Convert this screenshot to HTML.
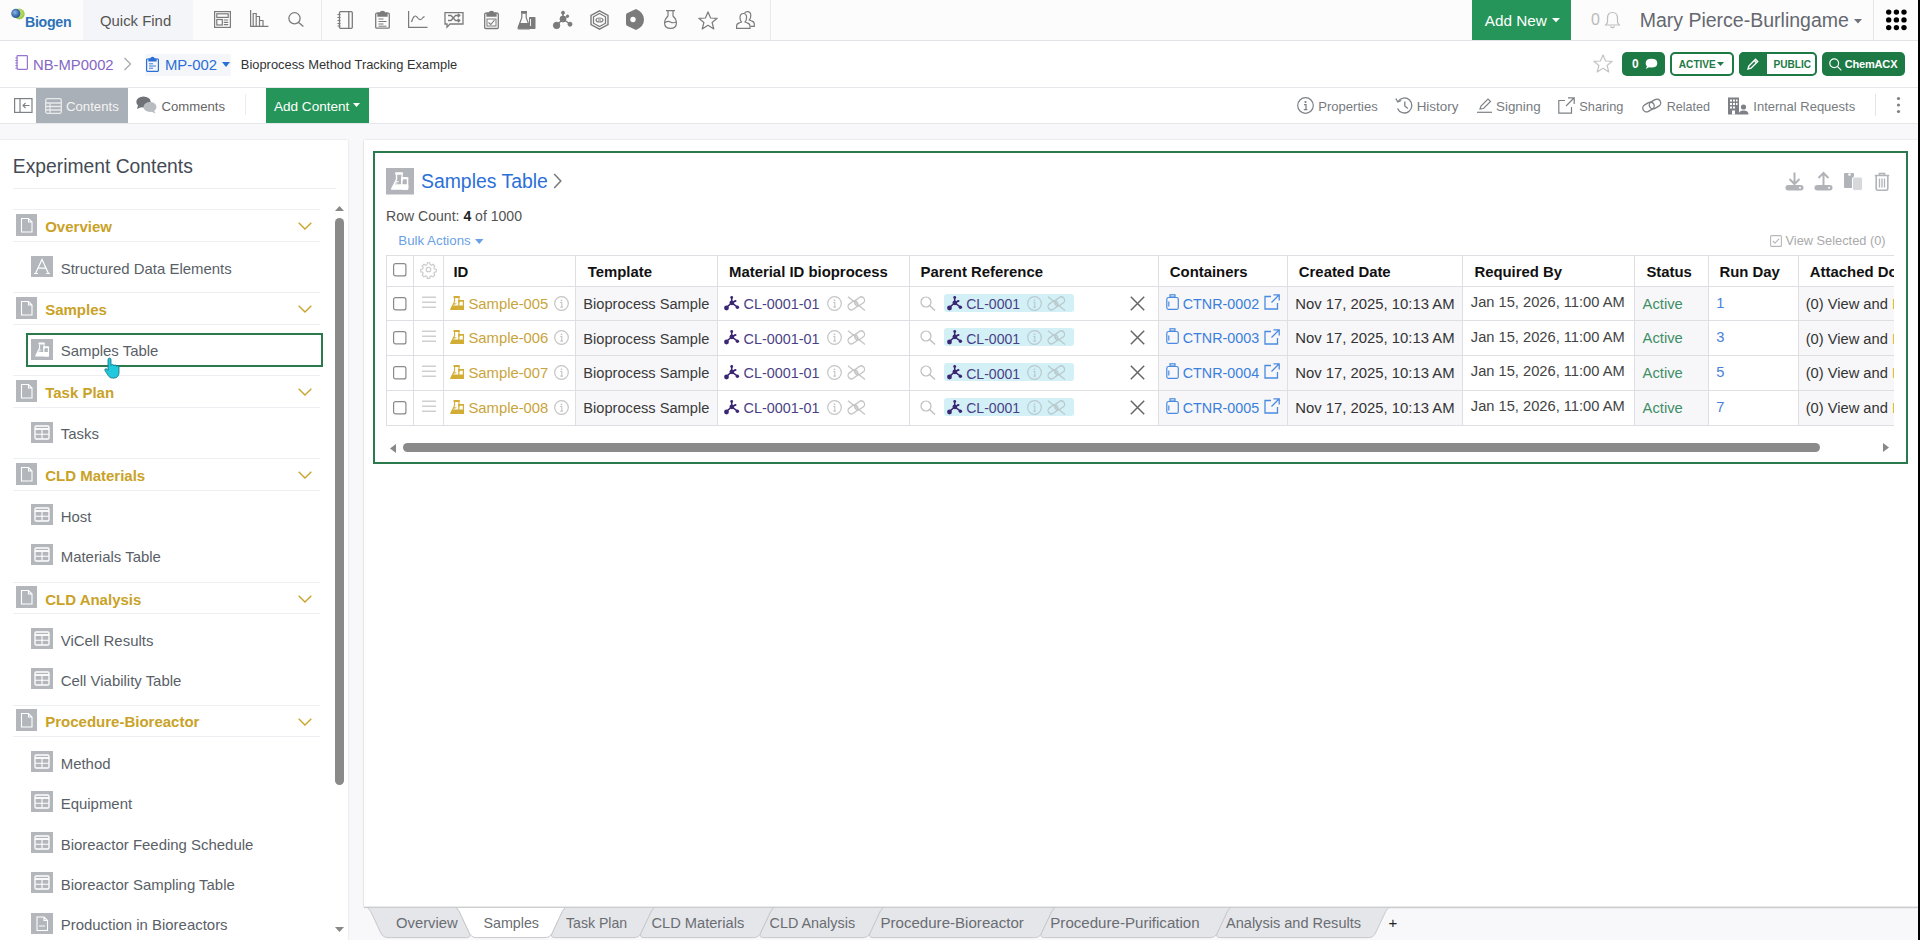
<!DOCTYPE html>
<html><head><meta charset="utf-8"><title>Samples Table</title>
<style>
html,body{margin:0;padding:0}
body{width:1920px;height:940px;overflow:hidden;position:relative;background:#f8f8fa;font-family:"Liberation Sans", sans-serif;}
.t{position:absolute;white-space:nowrap;line-height:20px;}
.b{position:absolute;}
svg.b{overflow:visible}
</style></head><body>

<div class="b" style="left:0px;top:0px;width:1920px;height:40px;background:#fcfcfd;"></div>
<div class="b" style="left:0px;top:40px;width:1918px;height:1px;background:#e2e3e7;"></div>
<div class="b" style="left:83px;top:0px;width:110px;height:40px;background:#f4f5f8;"></div>
<svg class="b" style="left:0;top:0" width="30" height="30" viewBox="0 0 30 30"><defs><radialGradient id="lg" cx="40%" cy="40%" r="65%"><stop offset="0" stop-color="#8fb8e8"/><stop offset="0.6" stop-color="#3d6fb0"/><stop offset="1" stop-color="#2a528f"/></radialGradient><radialGradient id="lg2" cx="40%" cy="40%" r="70%"><stop offset="0" stop-color="#d8eb8a"/><stop offset="1" stop-color="#8fc23a"/></radialGradient></defs><circle cx="19.3" cy="14" r="5.4" fill="url(#lg2)"/><circle cx="15.8" cy="13.4" r="4.6" fill="url(#lg)"/></svg>
<div class="t " style="left:25.0px;top:11.88px;font-size:14.2px;color:#2d72b6;font-weight:700;letter-spacing:-0.3px;">Biogen</div>
<div class="t " style="left:100.0px;top:10.84px;font-size:14.9px;color:#555;">Quick Find</div>
<div class="b" style="left:321px;top:0px;width:1px;height:40px;background:#e8e9ec;"></div>
<div class="b" style="left:770px;top:0px;width:1px;height:40px;background:#e8e9ec;"></div>
<div class="b" style="left:1472px;top:0px;width:99px;height:40px;background:#259559;"></div>
<div class="t " style="left:1484.7px;top:11.10px;font-size:15.3px;color:#fff;">Add New</div>
<svg class="b" style="left:1551.5px;top:17.8px;" width="8" height="4.2" viewBox="0 0 8 4.2"><path d="M0 0h8L4 4.2z" fill="#fff"/></svg>
<div class="t " style="left:1591.0px;top:10.46px;font-size:16px;color:#bbb;">0</div>
<div class="b" style="left:1873px;top:0px;width:1px;height:40px;background:#e4e5e8;"></div>
<div class="t " style="left:1639.7px;top:9.64px;font-size:19.5px;color:#65686f;">Mary Pierce-Burlingame</div>
<svg class="b" style="left:1854px;top:19px;" width="8" height="4.5" viewBox="0 0 8 4.5"><path d="M0 0h8L4 4.5z" fill="#6e7178"/></svg>
<svg class="b" style="left:0;top:0" width="1906" height="40" viewBox="0 0 1906 40"><circle cx="1888.7" cy="12.1" r="2.7" fill="#000"/><circle cx="1888.7" cy="19.9" r="2.7" fill="#000"/><circle cx="1888.7" cy="27.6" r="2.7" fill="#000"/><circle cx="1896.4" cy="12.1" r="2.7" fill="#000"/><circle cx="1896.4" cy="19.9" r="2.7" fill="#000"/><circle cx="1896.4" cy="27.6" r="2.7" fill="#000"/><circle cx="1904" cy="12.1" r="2.7" fill="#000"/><circle cx="1904" cy="19.9" r="2.7" fill="#000"/><circle cx="1904" cy="27.6" r="2.7" fill="#000"/></svg>
<div class="b" style="left:0px;top:41px;width:1918px;height:46px;background:#fff;"></div>
<div class="b" style="left:0px;top:87px;width:1918px;height:1px;background:#e6e7ea;"></div>
<div class="t " style="left:33.0px;top:54.87px;font-size:14.8px;color:#8566c6;">NB-MP0002</div>
<svg class="b" style="left:123px;top:57px;" width="9" height="14" viewBox="0 0 9 14"><path d="M1.5 1 L7.5 7 L1.5 13" fill="none" stroke="#aaa" stroke-width="1.3"/></svg>
<div class="b" style="left:144.5px;top:53.7px;width:86px;height:22px;background:#f4f6fa;border-radius:2px;"></div>
<div class="t " style="left:165.0px;top:54.85px;font-size:14.85px;color:#2a6fd6;">MP-002</div>
<svg class="b" style="left:222px;top:62px;" width="8" height="5" viewBox="0 0 8 5"><path d="M0 0h8L4 5z" fill="#2a6fd6"/></svg>
<div class="t " style="left:240.8px;top:54.78px;font-size:12.9px;color:#333;">Bioprocess Method Tracking Example</div>
<div class="b" style="left:0px;top:88px;width:1918px;height:35px;background:#fff;"></div>
<div class="b" style="left:0px;top:123px;width:1918px;height:1px;background:#e6e7ea;"></div>
<div class="b" style="left:36px;top:88px;width:92px;height:35px;background:#aab0b7;"></div>
<div class="t " style="left:66.0px;top:96.93px;font-size:13.2px;color:#f4f4f4;">Contents</div>
<div class="t " style="left:161.5px;top:96.94px;font-size:13.15px;color:#666;">Comments</div>
<div class="b" style="left:245px;top:94px;width:1px;height:21px;background:#ececee;"></div>
<div class="b" style="left:266px;top:88px;width:102.5px;height:34.5px;background:#259559;"></div>
<div class="t " style="left:274.0px;top:96.80px;font-size:13.55px;color:#fff;">Add Content</div>
<svg class="b" style="left:353px;top:103px;" width="7" height="4" viewBox="0 0 7 4"><path d="M0 0h7L3.5 4z" fill="#fff"/></svg>
<div class="t " style="left:1318.3px;top:97.18px;font-size:13.05px;color:#777b80;">Properties</div>
<div class="t " style="left:1416.7px;top:97.06px;font-size:13.4px;color:#777b80;">History</div>
<div class="t " style="left:1496.0px;top:97.06px;font-size:13.4px;color:#777b80;">Signing</div>
<div class="t " style="left:1579.3px;top:97.26px;font-size:12.8px;color:#777b80;">Sharing</div>
<div class="t " style="left:1666.7px;top:97.33px;font-size:12.6px;color:#777b80;">Related</div>
<div class="t " style="left:1753.3px;top:97.20px;font-size:13px;color:#777b80;">Internal Requests</div>
<div class="b" style="left:1875px;top:94px;width:1px;height:22px;background:#e4e5e8;"></div>
<div class="b" style="left:0px;top:139.5px;width:348px;height:801px;background:#fff;box-shadow:0 0 1.5px rgba(0,0,0,0.16);"></div>
<div class="t " style="left:12.8px;top:156.71px;font-size:19.3px;color:#444a55;">Experiment Contents</div>
<div class="b" style="left:13px;top:188px;width:323px;height:1px;background:#eceef1;"></div>
<div class="b" style="left:364px;top:139.5px;width:1554px;height:767.7px;background:#fff;box-shadow:0 0 1.5px rgba(0,0,0,0.16), 0 1px 2px rgba(0,0,0,0.1);"></div>
<div class="b" style="left:372.5px;top:151px;width:1535.5px;height:313px;border:2px solid #2a7a4e;box-sizing:border-box;"></div>
<div class="b" style="left:13px;top:209px;width:307px;height:1px;background:#eceef1;"></div>
<div class="b" style="left:13px;top:241px;width:307px;height:1px;background:#eceef1;"></div>
<svg class="b" style="left:16px;top:213.8px;" width="21" height="22" viewBox="0 0 21 22"><rect width="21" height="22" fill="#b3b6ba"/><path d="M5.5 4.5h7l3.5 3.5v10h-10.5z M12.5 4.5v3.5h3.5" fill="none" stroke="#fff" stroke-width="1.1"/></svg>
<div class="t " style="left:45.2px;top:217.10px;font-size:15px;color:#c9a227;font-weight:700;">Overview</div>
<svg class="b" style="left:298px;top:222.3px;" width="14" height="8" viewBox="0 0 14 8"><path d="M0.7 0.7 L7 7 L13.3 0.7" fill="none" stroke="#c9a227" stroke-width="1.3"/></svg>
<div class="b" style="left:13px;top:292px;width:307px;height:1px;background:#eceef1;"></div>
<div class="b" style="left:13px;top:324px;width:307px;height:1px;background:#eceef1;"></div>
<svg class="b" style="left:16px;top:296.8px;" width="21" height="22" viewBox="0 0 21 22"><rect width="21" height="22" fill="#b3b6ba"/><path d="M5.5 4.5h7l3.5 3.5v10h-10.5z M12.5 4.5v3.5h3.5" fill="none" stroke="#fff" stroke-width="1.1"/></svg>
<div class="t " style="left:45.2px;top:300.10px;font-size:15px;color:#c9a227;font-weight:700;">Samples</div>
<svg class="b" style="left:298px;top:305.3px;" width="14" height="8" viewBox="0 0 14 8"><path d="M0.7 0.7 L7 7 L13.3 0.7" fill="none" stroke="#c9a227" stroke-width="1.3"/></svg>
<div class="b" style="left:13px;top:375px;width:307px;height:1px;background:#eceef1;"></div>
<div class="b" style="left:13px;top:407px;width:307px;height:1px;background:#eceef1;"></div>
<svg class="b" style="left:16px;top:379.8px;" width="21" height="22" viewBox="0 0 21 22"><rect width="21" height="22" fill="#b3b6ba"/><path d="M5.5 4.5h7l3.5 3.5v10h-10.5z M12.5 4.5v3.5h3.5" fill="none" stroke="#fff" stroke-width="1.1"/></svg>
<div class="t " style="left:45.2px;top:383.10px;font-size:15px;color:#c9a227;font-weight:700;">Task Plan</div>
<svg class="b" style="left:298px;top:388.3px;" width="14" height="8" viewBox="0 0 14 8"><path d="M0.7 0.7 L7 7 L13.3 0.7" fill="none" stroke="#c9a227" stroke-width="1.3"/></svg>
<div class="b" style="left:13px;top:458px;width:307px;height:1px;background:#eceef1;"></div>
<div class="b" style="left:13px;top:490px;width:307px;height:1px;background:#eceef1;"></div>
<svg class="b" style="left:16px;top:462.8px;" width="21" height="22" viewBox="0 0 21 22"><rect width="21" height="22" fill="#b3b6ba"/><path d="M5.5 4.5h7l3.5 3.5v10h-10.5z M12.5 4.5v3.5h3.5" fill="none" stroke="#fff" stroke-width="1.1"/></svg>
<div class="t " style="left:45.2px;top:466.10px;font-size:15px;color:#c9a227;font-weight:700;">CLD Materials</div>
<svg class="b" style="left:298px;top:471.3px;" width="14" height="8" viewBox="0 0 14 8"><path d="M0.7 0.7 L7 7 L13.3 0.7" fill="none" stroke="#c9a227" stroke-width="1.3"/></svg>
<div class="b" style="left:13px;top:582px;width:307px;height:1px;background:#eceef1;"></div>
<div class="b" style="left:13px;top:613px;width:307px;height:1px;background:#eceef1;"></div>
<svg class="b" style="left:16px;top:586.3px;" width="21" height="22" viewBox="0 0 21 22"><rect width="21" height="22" fill="#b3b6ba"/><path d="M5.5 4.5h7l3.5 3.5v10h-10.5z M12.5 4.5v3.5h3.5" fill="none" stroke="#fff" stroke-width="1.1"/></svg>
<div class="t " style="left:45.2px;top:589.60px;font-size:15px;color:#c9a227;font-weight:700;">CLD Analysis</div>
<svg class="b" style="left:298px;top:594.8px;" width="14" height="8" viewBox="0 0 14 8"><path d="M0.7 0.7 L7 7 L13.3 0.7" fill="none" stroke="#c9a227" stroke-width="1.3"/></svg>
<div class="b" style="left:13px;top:704.5px;width:307px;height:1px;background:#eceef1;"></div>
<div class="b" style="left:13px;top:736px;width:307px;height:1px;background:#eceef1;"></div>
<svg class="b" style="left:16px;top:709.05px;" width="21" height="22" viewBox="0 0 21 22"><rect width="21" height="22" fill="#b3b6ba"/><path d="M5.5 4.5h7l3.5 3.5v10h-10.5z M12.5 4.5v3.5h3.5" fill="none" stroke="#fff" stroke-width="1.1"/></svg>
<div class="t " style="left:45.2px;top:712.35px;font-size:15px;color:#c9a227;font-weight:700;">Procedure-Bioreactor</div>
<svg class="b" style="left:298px;top:717.55px;" width="14" height="8" viewBox="0 0 14 8"><path d="M0.7 0.7 L7 7 L13.3 0.7" fill="none" stroke="#c9a227" stroke-width="1.3"/></svg>
<svg class="b" style="left:31px;top:255.7px;" width="22" height="21" viewBox="0 0 22 21"><rect width="22" height="21" fill="#b3b6ba"/><path d="M4.5 17.5 L11 3.5 L17.5 17.5 M7 12.2h8 M3 17.5h4 M15 17.5h4" fill="none" stroke="#fff" stroke-width="1.2"/></svg>
<div class="t " style="left:60.7px;top:258.62px;font-size:14.95px;color:#5a5f67;">Structured Data Elements</div>
<svg class="b" style="left:31px;top:338.5px;" width="22" height="21" viewBox="0 0 22 21"><rect width="22" height="21" fill="#b3b6ba"/><g transform="translate(4 3.5)"><rect x="3.5" y="0" width="6.3" height="2" rx="0.5" fill="#fff"/><path d="M4.6 2 V5.6 L0.8 13.3 M9 2 V5.6 L9.5 6.6" fill="none" stroke="#fff" stroke-width="1.1"/><path d="M2.6 9.6 H8.2 V14 H0.4 Q0 14 0.2 13.4z" fill="#fff"/><rect x="8.8" y="4.6" width="4.6" height="8.8" rx="0.6" fill="none" stroke="#fff" stroke-width="1.2"/><rect x="8.2" y="4" width="5.8" height="1.6" fill="#fff"/><rect x="8.2" y="9.6" width="5.8" height="4.4" rx="0.6" fill="#fff"/><path d="M4 7.5 h2.5 M3.4 8.6 h2" stroke="#fff" stroke-width="0.7"/></g></svg>
<div class="t " style="left:60.7px;top:341.42px;font-size:14.95px;color:#5a5f67;">Samples Table</div>
<svg class="b" style="left:31px;top:421.5px;" width="22" height="21" viewBox="0 0 22 21"><rect width="22" height="21" fill="#b3b6ba"/><rect x="4" y="4" width="14" height="13" rx="1.2" fill="none" stroke="#fff" stroke-width="1.3"/><path d="M4 12.2h14 M11 7.5v9" stroke="#fff" stroke-width="1.1"/><path d="M4 7h14" stroke="#fff" stroke-width="1.8"/></svg>
<div class="t " style="left:60.7px;top:424.42px;font-size:14.95px;color:#5a5f67;">Tasks</div>
<svg class="b" style="left:31px;top:504.20000000000005px;" width="22" height="21" viewBox="0 0 22 21"><rect width="22" height="21" fill="#b3b6ba"/><rect x="4" y="4" width="14" height="13" rx="1.2" fill="none" stroke="#fff" stroke-width="1.3"/><path d="M4 12.2h14 M11 7.5v9" stroke="#fff" stroke-width="1.1"/><path d="M4 7h14" stroke="#fff" stroke-width="1.8"/></svg>
<div class="t " style="left:60.7px;top:507.12px;font-size:14.95px;color:#5a5f67;">Host</div>
<svg class="b" style="left:31px;top:543.9px;" width="22" height="21" viewBox="0 0 22 21"><rect width="22" height="21" fill="#b3b6ba"/><rect x="4" y="4" width="14" height="13" rx="1.2" fill="none" stroke="#fff" stroke-width="1.3"/><path d="M4 12.2h14 M11 7.5v9" stroke="#fff" stroke-width="1.1"/><path d="M4 7h14" stroke="#fff" stroke-width="1.8"/></svg>
<div class="t " style="left:60.7px;top:546.82px;font-size:14.95px;color:#5a5f67;">Materials Table</div>
<svg class="b" style="left:31px;top:628.0px;" width="22" height="21" viewBox="0 0 22 21"><rect width="22" height="21" fill="#b3b6ba"/><rect x="4" y="4" width="14" height="13" rx="1.2" fill="none" stroke="#fff" stroke-width="1.3"/><path d="M4 12.2h14 M11 7.5v9" stroke="#fff" stroke-width="1.1"/><path d="M4 7h14" stroke="#fff" stroke-width="1.8"/></svg>
<div class="t " style="left:60.7px;top:630.92px;font-size:14.95px;color:#5a5f67;">ViCell Results</div>
<svg class="b" style="left:31px;top:668.3px;" width="22" height="21" viewBox="0 0 22 21"><rect width="22" height="21" fill="#b3b6ba"/><rect x="4" y="4" width="14" height="13" rx="1.2" fill="none" stroke="#fff" stroke-width="1.3"/><path d="M4 12.2h14 M11 7.5v9" stroke="#fff" stroke-width="1.1"/><path d="M4 7h14" stroke="#fff" stroke-width="1.8"/></svg>
<div class="t " style="left:60.7px;top:671.22px;font-size:14.95px;color:#5a5f67;">Cell Viability Table</div>
<svg class="b" style="left:31px;top:750.8px;" width="22" height="21" viewBox="0 0 22 21"><rect width="22" height="21" fill="#b3b6ba"/><rect x="4" y="4" width="14" height="13" rx="1.2" fill="none" stroke="#fff" stroke-width="1.3"/><path d="M4 12.2h14 M11 7.5v9" stroke="#fff" stroke-width="1.1"/><path d="M4 7h14" stroke="#fff" stroke-width="1.8"/></svg>
<div class="t " style="left:60.7px;top:753.72px;font-size:14.95px;color:#5a5f67;">Method</div>
<svg class="b" style="left:31px;top:791.4px;" width="22" height="21" viewBox="0 0 22 21"><rect width="22" height="21" fill="#b3b6ba"/><rect x="4" y="4" width="14" height="13" rx="1.2" fill="none" stroke="#fff" stroke-width="1.3"/><path d="M4 12.2h14 M11 7.5v9" stroke="#fff" stroke-width="1.1"/><path d="M4 7h14" stroke="#fff" stroke-width="1.8"/></svg>
<div class="t " style="left:60.7px;top:794.32px;font-size:14.95px;color:#5a5f67;">Equipment</div>
<svg class="b" style="left:31px;top:832.2px;" width="22" height="21" viewBox="0 0 22 21"><rect width="22" height="21" fill="#b3b6ba"/><rect x="4" y="4" width="14" height="13" rx="1.2" fill="none" stroke="#fff" stroke-width="1.3"/><path d="M4 12.2h14 M11 7.5v9" stroke="#fff" stroke-width="1.1"/><path d="M4 7h14" stroke="#fff" stroke-width="1.8"/></svg>
<div class="t " style="left:60.7px;top:835.12px;font-size:14.95px;color:#5a5f67;">Bioreactor Feeding Schedule</div>
<svg class="b" style="left:31px;top:872.1px;" width="22" height="21" viewBox="0 0 22 21"><rect width="22" height="21" fill="#b3b6ba"/><rect x="4" y="4" width="14" height="13" rx="1.2" fill="none" stroke="#fff" stroke-width="1.3"/><path d="M4 12.2h14 M11 7.5v9" stroke="#fff" stroke-width="1.1"/><path d="M4 7h14" stroke="#fff" stroke-width="1.8"/></svg>
<div class="t " style="left:60.7px;top:875.02px;font-size:14.95px;color:#5a5f67;">Bioreactor Sampling Table</div>
<svg class="b" style="left:31px;top:912.5px;" width="22" height="21" viewBox="0 0 22 21"><rect width="22" height="21" fill="#b3b6ba"/><path d="M6 4h7l3.5 3.5v10h-10.5z M13 4v3.5h3.5 M8 13h6" fill="none" stroke="#fff" stroke-width="1.1"/></svg>
<div class="t " style="left:60.7px;top:915.42px;font-size:14.95px;color:#5a5f67;">Production in Bioreactors</div>
<div class="b" style="left:25.5px;top:333px;width:297px;height:34px;border:2px solid #2b7a4b;box-sizing:border-box;"></div>
<svg class="b" style="left:334.5px;top:205.5px;" width="9" height="5" viewBox="0 0 9 5"><path d="M0 5h9L4.5 0z" fill="#888"/></svg>
<div class="b" style="left:335px;top:217.5px;width:8.5px;height:567px;background:#8a8a8a;border-radius:4.5px;"></div>
<svg class="b" style="left:334.5px;top:927.3px;" width="9" height="5" viewBox="0 0 9 5"><path d="M0 0h9L4.5 5z" fill="#888"/></svg>
<svg class="b" style="left:104px;top:357px;" width="16" height="22" viewBox="0 0 16 22"><path d="M4 2.5 c0-1.8 3-1.8 3 0 v6 c0.3-1.5 2.8-1.5 2.8 0.3 c0.3-1.3 2.7-1.2 2.7 0.5 c0.4-1 2.5-0.8 2.5 0.8 v5.5 c0 3-2 5.5-5 5.5 h-1.5 c-2 0-3.2-1-4.2-2.5 l-3.3-5 c-0.8-1.3 1-2.6 2-1.4 l1 1.2z" fill="#22c8dc" stroke="#0a6f80" stroke-width="0.8"/></svg>
<svg class="b" style="left:385.7px;top:168.05px;" width="28" height="26.5" viewBox="0 0 28 26.5"><rect width="28" height="26.5" fill="#b1b4b9"/><g transform="translate(4.8 4.3) scale(1.25)"><rect x="3.5" y="0" width="6.3" height="2" rx="0.5" fill="#fff"/><path d="M4.6 2 V5.6 L0.8 13.3 M9 2 V5.6 L9.5 6.6" fill="none" stroke="#fff" stroke-width="1.1"/><path d="M2.6 9.6 H8.2 V14 H0.4 Q0 14 0.2 13.4z" fill="#fff"/><rect x="8.8" y="4.6" width="4.6" height="8.8" rx="0.6" fill="none" stroke="#fff" stroke-width="1.2"/><rect x="8.2" y="4" width="5.8" height="1.6" fill="#fff"/><rect x="8.2" y="9.6" width="5.8" height="4.4" rx="0.6" fill="#fff"/><path d="M4 7.5 h2.5 M3.4 8.6 h2" stroke="#fff" stroke-width="0.7"/></g></svg>
<div class="t " style="left:421.0px;top:171.28px;font-size:19.4px;color:#2b6fd8;">Samples Table</div>
<svg class="b" style="left:553px;top:173px;" width="9" height="16" viewBox="0 0 9 16"><path d="M1.2 1 L7.8 8 L1.2 15" fill="none" stroke="#777" stroke-width="1.5"/></svg>
<div class="t" style="left:386.1px;top:205.73px;font-size:14.06px;color:#525252;">Row Count: <b style="color:#222">4</b> of 1000</div>
<div class="t " style="left:398.3px;top:231.29px;font-size:13.3px;color:#6b9fe6;">Bulk Actions</div>
<svg class="b" style="left:474.7px;top:238.5px;" width="8.5" height="5" viewBox="0 0 8.5 5"><path d="M0 0h8.5L4.25 5z" fill="#6b9fe6"/></svg>
<svg class="b" style="left:1769.5px;top:234.8px;" width="12" height="12" viewBox="0 0 12 12"><rect x="0.6" y="0.6" width="10.8" height="10.8" rx="1" fill="none" stroke="#b8b8b8" stroke-width="1.1"/><path d="M2.8 6 L5 8.2 L9.2 3.6" fill="none" stroke="#b8b8b8" stroke-width="1.1"/></svg>
<div class="t " style="left:1785.5px;top:231.16px;font-size:12.8px;color:#aaa;">View Selected (0)</div>
<svg class="b" style="left:1785px;top:172px;" width="19" height="19" viewBox="0 0 19 19"><path d="M9.5 0.5 v11 M4.5 7 L9.5 12 L14.5 7" fill="none" stroke="#b0b3b8" stroke-width="2"/><rect x="0.5" y="13" width="18" height="5.5" rx="2.7" fill="#b0b3b8"/><circle cx="15" cy="15.8" r="1" fill="#fff"/></svg>
<svg class="b" style="left:1814.3px;top:172px;" width="19" height="19" viewBox="0 0 19 19"><path d="M9.5 13 v-12 M4.5 6 L9.5 1 L14.5 6" fill="none" stroke="#b0b3b8" stroke-width="2"/><rect x="0.5" y="13" width="18" height="5.5" rx="2.7" fill="#b0b3b8"/><circle cx="15" cy="15.8" r="1" fill="#fff"/></svg>
<svg class="b" style="left:1844px;top:172px;" width="19" height="19" viewBox="0 0 19 19"><rect x="0" y="1" width="10" height="15" rx="1" fill="#b0b3b8"/><circle cx="5.5" cy="2.5" r="1.3" fill="#fff"/><rect x="8.5" y="5" width="10" height="13.5" rx="2" fill="#d6d8db" stroke="#fff" stroke-width="1"/></svg>
<svg class="b" style="left:1873.6px;top:172px;" width="16" height="19" viewBox="0 0 16 19"><path d="M0.8 3.5 h14.4 M5.5 3.5 v-2 h5 v2" fill="none" stroke="#b0b3b8" stroke-width="1.6"/><path d="M2.2 4 v12.5 q0 1.7 1.7 1.7 h8.2 q1.7 0 1.7 -1.7 v-12.5" fill="none" stroke="#b0b3b8" stroke-width="1.6"/><path d="M5.5 6.5 v9 M8 6.5 v9 M10.5 6.5 v9" stroke="#b0b3b8" stroke-width="1.3"/></svg>
<div class="b" style="left:0;top:0;width:1894px;height:940px;overflow:hidden;">
<div class="b" style="left:575px;top:286px;width:142px;height:139px;background:#f7f7f9;"></div>
<div class="b" style="left:1158px;top:286px;width:129px;height:139px;background:#f7f7f9;"></div>
<div class="b" style="left:1287px;top:286px;width:175px;height:139px;background:#f7f7f9;"></div>
<div class="b" style="left:1634px;top:286px;width:74px;height:139px;background:#f7f7f9;"></div>
<div class="b" style="left:1798px;top:286px;width:96px;height:139px;background:#f7f7f9;"></div>
<div class="b" style="left:386px;top:255px;width:1508px;height:1px;background:#dedfe3;"></div>
<div class="b" style="left:386px;top:286px;width:1508px;height:1px;background:#dedfe3;"></div>
<div class="b" style="left:386px;top:320px;width:1508px;height:1px;background:#dedfe3;"></div>
<div class="b" style="left:386px;top:355px;width:1508px;height:1px;background:#dedfe3;"></div>
<div class="b" style="left:386px;top:390px;width:1508px;height:1px;background:#dedfe3;"></div>
<div class="b" style="left:386px;top:425px;width:1508px;height:1px;background:#dedfe3;"></div>
<div class="b" style="left:386px;top:255px;width:1px;height:170px;background:#dedfe3;"></div>
<div class="b" style="left:413px;top:255px;width:1px;height:170px;background:#dedfe3;"></div>
<div class="b" style="left:443px;top:255px;width:1px;height:170px;background:#dedfe3;"></div>
<div class="b" style="left:575px;top:255px;width:1px;height:170px;background:#dedfe3;"></div>
<div class="b" style="left:717px;top:255px;width:1px;height:170px;background:#dedfe3;"></div>
<div class="b" style="left:909px;top:255px;width:1px;height:170px;background:#dedfe3;"></div>
<div class="b" style="left:1158px;top:255px;width:1px;height:170px;background:#dedfe3;"></div>
<div class="b" style="left:1287px;top:255px;width:1px;height:170px;background:#dedfe3;"></div>
<div class="b" style="left:1462px;top:255px;width:1px;height:170px;background:#dedfe3;"></div>
<div class="b" style="left:1634px;top:255px;width:1px;height:170px;background:#dedfe3;"></div>
<div class="b" style="left:1708px;top:255px;width:1px;height:170px;background:#dedfe3;"></div>
<div class="b" style="left:1798px;top:255px;width:1px;height:170px;background:#dedfe3;"></div>
<div class="t " style="left:453.4px;top:261.54px;font-size:14.9px;color:#111;font-weight:700;">ID</div>
<div class="t " style="left:587.7px;top:261.54px;font-size:14.9px;color:#111;font-weight:700;">Template</div>
<div class="t " style="left:729.0px;top:261.54px;font-size:14.9px;color:#111;font-weight:700;">Material ID bioprocess</div>
<div class="t " style="left:920.5px;top:261.54px;font-size:14.9px;color:#111;font-weight:700;">Parent Reference</div>
<div class="t " style="left:1169.8px;top:261.54px;font-size:14.9px;color:#111;font-weight:700;">Containers</div>
<div class="t " style="left:1298.8px;top:261.54px;font-size:14.9px;color:#111;font-weight:700;">Created Date</div>
<div class="t " style="left:1474.4px;top:261.54px;font-size:14.9px;color:#111;font-weight:700;">Required By</div>
<div class="t " style="left:1646.4px;top:261.54px;font-size:14.9px;color:#111;font-weight:700;">Status</div>
<div class="t " style="left:1719.5px;top:261.54px;font-size:14.9px;color:#111;font-weight:700;">Run Day</div>
<div class="t " style="left:1809.8px;top:261.54px;font-size:14.9px;color:#111;font-weight:700;">Attached Documents</div>
<svg class="b" style="left:392.5px;top:263px;" width="13.5" height="13.5" viewBox="0 0 13.5 13.5"><rect x="0.6" y="0.6" width="12.3" height="12.3" rx="2" fill="#fff" stroke="#8a8a8a" stroke-width="1.2"/></svg>
<svg class="b" style="left:420.5px;top:262px;" width="15" height="15" viewBox="0 0 15 15"><g fill="none" stroke="#c9c9c9" stroke-width="1.1"><circle cx="7.5" cy="7.5" r="2.3"/><path d="M6.3 0.8h2.4l0.4 1.9 1.3 0.6 1.7-1 1.7 1.7-1 1.7 0.6 1.3 1.9 0.4v2.4l-1.9 0.4-0.6 1.3 1 1.7-1.7 1.7-1.7-1-1.3 0.6-0.4 1.9h-2.4l-0.4-1.9-1.3-0.6-1.7 1-1.7-1.7 1-1.7-0.6-1.3-1.9-0.4v-2.4l1.9-0.4 0.6-1.3-1-1.7 1.7-1.7 1.7 1 1.3-0.6z"/></g></svg>
<svg class="b" style="left:392.8px;top:296.49999999999994px;" width="13.5" height="13.5" viewBox="0 0 13.5 13.5"><rect x="0.6" y="0.6" width="12.3" height="12.3" rx="2" fill="#fff" stroke="#8a8a8a" stroke-width="1.2"/></svg>
<svg class="b" style="left:421.8px;top:295.79999999999995px;" width="14" height="12" viewBox="0 0 14 12"><path d="M0 1.2h14 M0 6.2h14 M0 11.2h14" stroke="#cfcfcf" stroke-width="1.5"/></svg>
<svg class="b" style="left:450.2px;top:295.99999999999994px;" width="14" height="14" viewBox="0 0 14 14"><rect x="3.5" y="0" width="6.3" height="2" rx="0.5" fill="#d2ad35"/><path d="M4.6 2 V5.6 L0.8 13.3 M9 2 V5.6 L9.5 6.6" fill="none" stroke="#d2ad35" stroke-width="1.1"/><path d="M2.6 9.6 H8.2 V14 H0.4 Q0 14 0.2 13.4z" fill="#d2ad35"/><rect x="8.8" y="4.6" width="4.6" height="8.8" rx="0.6" fill="none" stroke="#d2ad35" stroke-width="1.2"/><rect x="8.2" y="4" width="5.8" height="1.6" fill="#d2ad35"/><rect x="8.2" y="9.6" width="5.8" height="4.4" rx="0.6" fill="#d2ad35"/><path d="M4 7.5 h2.5 M3.4 8.6 h2" stroke="#d2ad35" stroke-width="0.7"/></svg>
<div class="t " style="left:468.5px;top:294.17px;font-size:14.8px;color:#c9a43a;">Sample-005</div>
<svg class="b" style="left:553.6px;top:295.79999999999995px;" width="15" height="15" viewBox="0 0 15 15"><circle cx="7.5" cy="7.5" r="6.8" fill="none" stroke="#c4c4c4" stroke-width="1.2"/><circle cx="7.5" cy="4.3" r="0.9" fill="#c4c4c4"/><path d="M6.3 6.5h1.5v4.6 M6.3 11.1h2.6" fill="none" stroke="#c4c4c4" stroke-width="1.1"/></svg>
<div class="t " style="left:583.3px;top:294.23px;font-size:14.63px;color:#3a3a3a;">Bioprocess Sample</div>
<svg class="b" style="left:724.2px;top:295.59999999999997px;" width="15" height="15" viewBox="0 0 15 15"><g fill="#3b2673" stroke="#3b2673"><path d="M7.7 1.4 V6.8 L2.1 11.8 M7.7 6.8 L13.5 11.1 M7.7 6.8 L11.3 5" stroke-width="1.5" fill="none"/><circle cx="7.7" cy="1.5" r="1.4" stroke="none"/><circle cx="7.9" cy="6.8" r="2.4" stroke="none"/><circle cx="2.5" cy="12" r="2.4" stroke="none"/><circle cx="13.4" cy="11.2" r="1.7" stroke="none"/><circle cx="11.4" cy="5" r="1.1" stroke="none"/></g></svg>
<div class="t " style="left:743.6px;top:294.31px;font-size:14.39px;color:#4a3f86;">CL-0001-01</div>
<svg class="b" style="left:827.3px;top:295.79999999999995px;" width="15" height="15" viewBox="0 0 15 15"><circle cx="7.5" cy="7.5" r="6.8" fill="none" stroke="#c4c4c4" stroke-width="1.2"/><circle cx="7.5" cy="4.3" r="0.9" fill="#c4c4c4"/><path d="M6.3 6.5h1.5v4.6 M6.3 11.1h2.6" fill="none" stroke="#c4c4c4" stroke-width="1.1"/></svg>
<svg class="b" style="left:847.3px;top:295.79999999999995px;" width="19" height="15" viewBox="0 0 19 15"><g fill="none" stroke="#c4c4c4" stroke-width="1.3"><rect x="-5.3" y="-3.3" width="10.6" height="6.6" rx="3.3" transform="translate(6 9.4) rotate(-35)"/><rect x="-5.3" y="-3.3" width="10.6" height="6.6" rx="3.3" transform="translate(12.6 5.4) rotate(-35)"/><path d="M1 0.8 L18 14.4" stroke-width="1.3"/></g></svg>
<svg class="b" style="left:920px;top:295.79999999999995px;" width="16" height="15" viewBox="0 0 16 15"><circle cx="6" cy="6" r="5" fill="none" stroke="#bdbdbd" stroke-width="1.2"/><path d="M9.6 9.6 L15 14.5" stroke="#bdbdbd" stroke-width="1.3"/></svg>
<div class="b" style="left:943.6px;top:294.0px;width:130.4px;height:18px;background:#d3f0f7;border-radius:3px;"></div>
<svg class="b" style="left:947px;top:295.59999999999997px;" width="15" height="15" viewBox="0 0 15 15"><g fill="#3b2673" stroke="#3b2673"><path d="M7.7 1.4 V6.8 L2.1 11.8 M7.7 6.8 L13.5 11.1 M7.7 6.8 L11.3 5" stroke-width="1.5" fill="none"/><circle cx="7.7" cy="1.5" r="1.4" stroke="none"/><circle cx="7.9" cy="6.8" r="2.4" stroke="none"/><circle cx="2.5" cy="12" r="2.4" stroke="none"/><circle cx="13.4" cy="11.2" r="1.7" stroke="none"/><circle cx="11.4" cy="5" r="1.1" stroke="none"/></g></svg>
<div class="t " style="left:966.2px;top:294.43px;font-size:14.05px;color:#4a3f86;">CL-0001</div>
<svg class="b" style="left:1027.1px;top:295.79999999999995px;" width="15" height="15" viewBox="0 0 15 15"><circle cx="7.5" cy="7.5" r="6.8" fill="none" stroke="#b9c9cc" stroke-width="1.2"/><circle cx="7.5" cy="4.3" r="0.9" fill="#b9c9cc"/><path d="M6.3 6.5h1.5v4.6 M6.3 11.1h2.6" fill="none" stroke="#b9c9cc" stroke-width="1.1"/></svg>
<svg class="b" style="left:1046.9px;top:295.79999999999995px;" width="19" height="15" viewBox="0 0 19 15"><g fill="none" stroke="#b9c9cc" stroke-width="1.3"><rect x="-5.3" y="-3.3" width="10.6" height="6.6" rx="3.3" transform="translate(6 9.4) rotate(-35)"/><rect x="-5.3" y="-3.3" width="10.6" height="6.6" rx="3.3" transform="translate(12.6 5.4) rotate(-35)"/><path d="M1 0.8 L18 14.4" stroke-width="1.3"/></g></svg>
<svg class="b" style="left:1130px;top:295.79999999999995px;" width="15" height="15" viewBox="0 0 15 15"><path d="M0.8 0.8 L14.2 14.2 M14.2 0.8 L0.8 14.2" stroke="#666" stroke-width="1.5"/></svg>
<svg class="b" style="left:1165.6px;top:294.09999999999997px;" width="13" height="16" viewBox="0 0 13 16"><g fill="none" stroke="#4a8ae0" stroke-width="1.2"><rect x="4" y="0.8" width="5" height="2.2"/><path d="M2.5 3.5 h8 q1.8 0 1.8 1.8 v8.5 q0 1.5 -1.5 1.5 h-8.5 q-1.5 0 -1.5 -1.5 v-8.5 q0 -1.8 1.7 -1.8z"/><path d="M2.8 7.5 v5"/></g></svg>
<div class="t " style="left:1182.7px;top:293.83px;font-size:14.34px;color:#3a80dc;">CTNR-0002</div>
<svg class="b" style="left:1264px;top:294.29999999999995px;" width="16" height="16" viewBox="0 0 16 16"><g fill="none" stroke="#4a8ae0" stroke-width="1.3"><path d="M7 2.5 H1 V15 H13.5 V9"/><path d="M9.5 0.8 H15.2 V6.5 M15 1 L7.5 8.5"/></g></svg>
<div class="t " style="left:1295.2px;top:294.15px;font-size:14.86px;color:#333;">Nov 17, 2025, 10:13 AM</div>
<div class="t " style="left:1470.8px;top:292.21px;font-size:14.68px;color:#444;">Jan 15, 2026, 11:00 AM</div>
<div class="t " style="left:1642.6px;top:294.19px;font-size:14.76px;color:#3e8e66;">Active</div>
<div class="t " style="left:1716.3px;top:293.01px;font-size:14.7px;color:#4a80d8;">1</div>
<div class="t" style="left:1805.7px;top:294.21px;font-size:14.7px;color:#333;">(0) View and <span style="color:#d4b13c">Edit</span></div>
<svg class="b" style="left:392.8px;top:330.8px;" width="13.5" height="13.5" viewBox="0 0 13.5 13.5"><rect x="0.6" y="0.6" width="12.3" height="12.3" rx="2" fill="#fff" stroke="#8a8a8a" stroke-width="1.2"/></svg>
<svg class="b" style="left:421.8px;top:330.1px;" width="14" height="12" viewBox="0 0 14 12"><path d="M0 1.2h14 M0 6.2h14 M0 11.2h14" stroke="#cfcfcf" stroke-width="1.5"/></svg>
<svg class="b" style="left:450.2px;top:330.3px;" width="14" height="14" viewBox="0 0 14 14"><rect x="3.5" y="0" width="6.3" height="2" rx="0.5" fill="#d2ad35"/><path d="M4.6 2 V5.6 L0.8 13.3 M9 2 V5.6 L9.5 6.6" fill="none" stroke="#d2ad35" stroke-width="1.1"/><path d="M2.6 9.6 H8.2 V14 H0.4 Q0 14 0.2 13.4z" fill="#d2ad35"/><rect x="8.8" y="4.6" width="4.6" height="8.8" rx="0.6" fill="none" stroke="#d2ad35" stroke-width="1.2"/><rect x="8.2" y="4" width="5.8" height="1.6" fill="#d2ad35"/><rect x="8.2" y="9.6" width="5.8" height="4.4" rx="0.6" fill="#d2ad35"/><path d="M4 7.5 h2.5 M3.4 8.6 h2" stroke="#d2ad35" stroke-width="0.7"/></svg>
<div class="t " style="left:468.5px;top:328.47px;font-size:14.8px;color:#c9a43a;">Sample-006</div>
<svg class="b" style="left:553.6px;top:330.1px;" width="15" height="15" viewBox="0 0 15 15"><circle cx="7.5" cy="7.5" r="6.8" fill="none" stroke="#c4c4c4" stroke-width="1.2"/><circle cx="7.5" cy="4.3" r="0.9" fill="#c4c4c4"/><path d="M6.3 6.5h1.5v4.6 M6.3 11.1h2.6" fill="none" stroke="#c4c4c4" stroke-width="1.1"/></svg>
<div class="t " style="left:583.3px;top:328.53px;font-size:14.63px;color:#3a3a3a;">Bioprocess Sample</div>
<svg class="b" style="left:724.2px;top:329.90000000000003px;" width="15" height="15" viewBox="0 0 15 15"><g fill="#3b2673" stroke="#3b2673"><path d="M7.7 1.4 V6.8 L2.1 11.8 M7.7 6.8 L13.5 11.1 M7.7 6.8 L11.3 5" stroke-width="1.5" fill="none"/><circle cx="7.7" cy="1.5" r="1.4" stroke="none"/><circle cx="7.9" cy="6.8" r="2.4" stroke="none"/><circle cx="2.5" cy="12" r="2.4" stroke="none"/><circle cx="13.4" cy="11.2" r="1.7" stroke="none"/><circle cx="11.4" cy="5" r="1.1" stroke="none"/></g></svg>
<div class="t " style="left:743.6px;top:328.61px;font-size:14.39px;color:#4a3f86;">CL-0001-01</div>
<svg class="b" style="left:827.3px;top:330.1px;" width="15" height="15" viewBox="0 0 15 15"><circle cx="7.5" cy="7.5" r="6.8" fill="none" stroke="#c4c4c4" stroke-width="1.2"/><circle cx="7.5" cy="4.3" r="0.9" fill="#c4c4c4"/><path d="M6.3 6.5h1.5v4.6 M6.3 11.1h2.6" fill="none" stroke="#c4c4c4" stroke-width="1.1"/></svg>
<svg class="b" style="left:847.3px;top:330.1px;" width="19" height="15" viewBox="0 0 19 15"><g fill="none" stroke="#c4c4c4" stroke-width="1.3"><rect x="-5.3" y="-3.3" width="10.6" height="6.6" rx="3.3" transform="translate(6 9.4) rotate(-35)"/><rect x="-5.3" y="-3.3" width="10.6" height="6.6" rx="3.3" transform="translate(12.6 5.4) rotate(-35)"/><path d="M1 0.8 L18 14.4" stroke-width="1.3"/></g></svg>
<svg class="b" style="left:920px;top:330.1px;" width="16" height="15" viewBox="0 0 16 15"><circle cx="6" cy="6" r="5" fill="none" stroke="#bdbdbd" stroke-width="1.2"/><path d="M9.6 9.6 L15 14.5" stroke="#bdbdbd" stroke-width="1.3"/></svg>
<div class="b" style="left:943.6px;top:328.3px;width:130.4px;height:18px;background:#d3f0f7;border-radius:3px;"></div>
<svg class="b" style="left:947px;top:329.90000000000003px;" width="15" height="15" viewBox="0 0 15 15"><g fill="#3b2673" stroke="#3b2673"><path d="M7.7 1.4 V6.8 L2.1 11.8 M7.7 6.8 L13.5 11.1 M7.7 6.8 L11.3 5" stroke-width="1.5" fill="none"/><circle cx="7.7" cy="1.5" r="1.4" stroke="none"/><circle cx="7.9" cy="6.8" r="2.4" stroke="none"/><circle cx="2.5" cy="12" r="2.4" stroke="none"/><circle cx="13.4" cy="11.2" r="1.7" stroke="none"/><circle cx="11.4" cy="5" r="1.1" stroke="none"/></g></svg>
<div class="t " style="left:966.2px;top:328.73px;font-size:14.05px;color:#4a3f86;">CL-0001</div>
<svg class="b" style="left:1027.1px;top:330.1px;" width="15" height="15" viewBox="0 0 15 15"><circle cx="7.5" cy="7.5" r="6.8" fill="none" stroke="#b9c9cc" stroke-width="1.2"/><circle cx="7.5" cy="4.3" r="0.9" fill="#b9c9cc"/><path d="M6.3 6.5h1.5v4.6 M6.3 11.1h2.6" fill="none" stroke="#b9c9cc" stroke-width="1.1"/></svg>
<svg class="b" style="left:1046.9px;top:330.1px;" width="19" height="15" viewBox="0 0 19 15"><g fill="none" stroke="#b9c9cc" stroke-width="1.3"><rect x="-5.3" y="-3.3" width="10.6" height="6.6" rx="3.3" transform="translate(6 9.4) rotate(-35)"/><rect x="-5.3" y="-3.3" width="10.6" height="6.6" rx="3.3" transform="translate(12.6 5.4) rotate(-35)"/><path d="M1 0.8 L18 14.4" stroke-width="1.3"/></g></svg>
<svg class="b" style="left:1130px;top:330.1px;" width="15" height="15" viewBox="0 0 15 15"><path d="M0.8 0.8 L14.2 14.2 M14.2 0.8 L0.8 14.2" stroke="#666" stroke-width="1.5"/></svg>
<svg class="b" style="left:1165.6px;top:328.40000000000003px;" width="13" height="16" viewBox="0 0 13 16"><g fill="none" stroke="#4a8ae0" stroke-width="1.2"><rect x="4" y="0.8" width="5" height="2.2"/><path d="M2.5 3.5 h8 q1.8 0 1.8 1.8 v8.5 q0 1.5 -1.5 1.5 h-8.5 q-1.5 0 -1.5 -1.5 v-8.5 q0 -1.8 1.7 -1.8z"/><path d="M2.8 7.5 v5"/></g></svg>
<div class="t " style="left:1182.7px;top:328.13px;font-size:14.34px;color:#3a80dc;">CTNR-0003</div>
<svg class="b" style="left:1264px;top:328.6px;" width="16" height="16" viewBox="0 0 16 16"><g fill="none" stroke="#4a8ae0" stroke-width="1.3"><path d="M7 2.5 H1 V15 H13.5 V9"/><path d="M9.5 0.8 H15.2 V6.5 M15 1 L7.5 8.5"/></g></svg>
<div class="t " style="left:1295.2px;top:328.45px;font-size:14.86px;color:#333;">Nov 17, 2025, 10:13 AM</div>
<div class="t " style="left:1470.8px;top:326.51px;font-size:14.68px;color:#444;">Jan 15, 2026, 11:00 AM</div>
<div class="t " style="left:1642.6px;top:328.49px;font-size:14.76px;color:#3e8e66;">Active</div>
<div class="t " style="left:1716.3px;top:327.31px;font-size:14.7px;color:#4a80d8;">3</div>
<div class="t" style="left:1805.7px;top:328.51px;font-size:14.7px;color:#333;">(0) View and <span style="color:#d4b13c">Edit</span></div>
<svg class="b" style="left:392.8px;top:365.59999999999997px;" width="13.5" height="13.5" viewBox="0 0 13.5 13.5"><rect x="0.6" y="0.6" width="12.3" height="12.3" rx="2" fill="#fff" stroke="#8a8a8a" stroke-width="1.2"/></svg>
<svg class="b" style="left:421.8px;top:364.9px;" width="14" height="12" viewBox="0 0 14 12"><path d="M0 1.2h14 M0 6.2h14 M0 11.2h14" stroke="#cfcfcf" stroke-width="1.5"/></svg>
<svg class="b" style="left:450.2px;top:365.09999999999997px;" width="14" height="14" viewBox="0 0 14 14"><rect x="3.5" y="0" width="6.3" height="2" rx="0.5" fill="#d2ad35"/><path d="M4.6 2 V5.6 L0.8 13.3 M9 2 V5.6 L9.5 6.6" fill="none" stroke="#d2ad35" stroke-width="1.1"/><path d="M2.6 9.6 H8.2 V14 H0.4 Q0 14 0.2 13.4z" fill="#d2ad35"/><rect x="8.8" y="4.6" width="4.6" height="8.8" rx="0.6" fill="none" stroke="#d2ad35" stroke-width="1.2"/><rect x="8.2" y="4" width="5.8" height="1.6" fill="#d2ad35"/><rect x="8.2" y="9.6" width="5.8" height="4.4" rx="0.6" fill="#d2ad35"/><path d="M4 7.5 h2.5 M3.4 8.6 h2" stroke="#d2ad35" stroke-width="0.7"/></svg>
<div class="t " style="left:468.5px;top:363.27px;font-size:14.8px;color:#c9a43a;">Sample-007</div>
<svg class="b" style="left:553.6px;top:364.9px;" width="15" height="15" viewBox="0 0 15 15"><circle cx="7.5" cy="7.5" r="6.8" fill="none" stroke="#c4c4c4" stroke-width="1.2"/><circle cx="7.5" cy="4.3" r="0.9" fill="#c4c4c4"/><path d="M6.3 6.5h1.5v4.6 M6.3 11.1h2.6" fill="none" stroke="#c4c4c4" stroke-width="1.1"/></svg>
<div class="t " style="left:583.3px;top:363.33px;font-size:14.63px;color:#3a3a3a;">Bioprocess Sample</div>
<svg class="b" style="left:724.2px;top:364.7px;" width="15" height="15" viewBox="0 0 15 15"><g fill="#3b2673" stroke="#3b2673"><path d="M7.7 1.4 V6.8 L2.1 11.8 M7.7 6.8 L13.5 11.1 M7.7 6.8 L11.3 5" stroke-width="1.5" fill="none"/><circle cx="7.7" cy="1.5" r="1.4" stroke="none"/><circle cx="7.9" cy="6.8" r="2.4" stroke="none"/><circle cx="2.5" cy="12" r="2.4" stroke="none"/><circle cx="13.4" cy="11.2" r="1.7" stroke="none"/><circle cx="11.4" cy="5" r="1.1" stroke="none"/></g></svg>
<div class="t " style="left:743.6px;top:363.41px;font-size:14.39px;color:#4a3f86;">CL-0001-01</div>
<svg class="b" style="left:827.3px;top:364.9px;" width="15" height="15" viewBox="0 0 15 15"><circle cx="7.5" cy="7.5" r="6.8" fill="none" stroke="#c4c4c4" stroke-width="1.2"/><circle cx="7.5" cy="4.3" r="0.9" fill="#c4c4c4"/><path d="M6.3 6.5h1.5v4.6 M6.3 11.1h2.6" fill="none" stroke="#c4c4c4" stroke-width="1.1"/></svg>
<svg class="b" style="left:847.3px;top:364.9px;" width="19" height="15" viewBox="0 0 19 15"><g fill="none" stroke="#c4c4c4" stroke-width="1.3"><rect x="-5.3" y="-3.3" width="10.6" height="6.6" rx="3.3" transform="translate(6 9.4) rotate(-35)"/><rect x="-5.3" y="-3.3" width="10.6" height="6.6" rx="3.3" transform="translate(12.6 5.4) rotate(-35)"/><path d="M1 0.8 L18 14.4" stroke-width="1.3"/></g></svg>
<svg class="b" style="left:920px;top:364.9px;" width="16" height="15" viewBox="0 0 16 15"><circle cx="6" cy="6" r="5" fill="none" stroke="#bdbdbd" stroke-width="1.2"/><path d="M9.6 9.6 L15 14.5" stroke="#bdbdbd" stroke-width="1.3"/></svg>
<div class="b" style="left:943.6px;top:363.1px;width:130.4px;height:18px;background:#d3f0f7;border-radius:3px;"></div>
<svg class="b" style="left:947px;top:364.7px;" width="15" height="15" viewBox="0 0 15 15"><g fill="#3b2673" stroke="#3b2673"><path d="M7.7 1.4 V6.8 L2.1 11.8 M7.7 6.8 L13.5 11.1 M7.7 6.8 L11.3 5" stroke-width="1.5" fill="none"/><circle cx="7.7" cy="1.5" r="1.4" stroke="none"/><circle cx="7.9" cy="6.8" r="2.4" stroke="none"/><circle cx="2.5" cy="12" r="2.4" stroke="none"/><circle cx="13.4" cy="11.2" r="1.7" stroke="none"/><circle cx="11.4" cy="5" r="1.1" stroke="none"/></g></svg>
<div class="t " style="left:966.2px;top:363.53px;font-size:14.05px;color:#4a3f86;">CL-0001</div>
<svg class="b" style="left:1027.1px;top:364.9px;" width="15" height="15" viewBox="0 0 15 15"><circle cx="7.5" cy="7.5" r="6.8" fill="none" stroke="#b9c9cc" stroke-width="1.2"/><circle cx="7.5" cy="4.3" r="0.9" fill="#b9c9cc"/><path d="M6.3 6.5h1.5v4.6 M6.3 11.1h2.6" fill="none" stroke="#b9c9cc" stroke-width="1.1"/></svg>
<svg class="b" style="left:1046.9px;top:364.9px;" width="19" height="15" viewBox="0 0 19 15"><g fill="none" stroke="#b9c9cc" stroke-width="1.3"><rect x="-5.3" y="-3.3" width="10.6" height="6.6" rx="3.3" transform="translate(6 9.4) rotate(-35)"/><rect x="-5.3" y="-3.3" width="10.6" height="6.6" rx="3.3" transform="translate(12.6 5.4) rotate(-35)"/><path d="M1 0.8 L18 14.4" stroke-width="1.3"/></g></svg>
<svg class="b" style="left:1130px;top:364.9px;" width="15" height="15" viewBox="0 0 15 15"><path d="M0.8 0.8 L14.2 14.2 M14.2 0.8 L0.8 14.2" stroke="#666" stroke-width="1.5"/></svg>
<svg class="b" style="left:1165.6px;top:363.2px;" width="13" height="16" viewBox="0 0 13 16"><g fill="none" stroke="#4a8ae0" stroke-width="1.2"><rect x="4" y="0.8" width="5" height="2.2"/><path d="M2.5 3.5 h8 q1.8 0 1.8 1.8 v8.5 q0 1.5 -1.5 1.5 h-8.5 q-1.5 0 -1.5 -1.5 v-8.5 q0 -1.8 1.7 -1.8z"/><path d="M2.8 7.5 v5"/></g></svg>
<div class="t " style="left:1182.7px;top:362.93px;font-size:14.34px;color:#3a80dc;">CTNR-0004</div>
<svg class="b" style="left:1264px;top:363.4px;" width="16" height="16" viewBox="0 0 16 16"><g fill="none" stroke="#4a8ae0" stroke-width="1.3"><path d="M7 2.5 H1 V15 H13.5 V9"/><path d="M9.5 0.8 H15.2 V6.5 M15 1 L7.5 8.5"/></g></svg>
<div class="t " style="left:1295.2px;top:363.25px;font-size:14.86px;color:#333;">Nov 17, 2025, 10:13 AM</div>
<div class="t " style="left:1470.8px;top:361.31px;font-size:14.68px;color:#444;">Jan 15, 2026, 11:00 AM</div>
<div class="t " style="left:1642.6px;top:363.29px;font-size:14.76px;color:#3e8e66;">Active</div>
<div class="t " style="left:1716.3px;top:362.11px;font-size:14.7px;color:#4a80d8;">5</div>
<div class="t" style="left:1805.7px;top:363.31px;font-size:14.7px;color:#333;">(0) View and <span style="color:#d4b13c">Edit</span></div>
<svg class="b" style="left:392.8px;top:400.55px;" width="13.5" height="13.5" viewBox="0 0 13.5 13.5"><rect x="0.6" y="0.6" width="12.3" height="12.3" rx="2" fill="#fff" stroke="#8a8a8a" stroke-width="1.2"/></svg>
<svg class="b" style="left:421.8px;top:399.85px;" width="14" height="12" viewBox="0 0 14 12"><path d="M0 1.2h14 M0 6.2h14 M0 11.2h14" stroke="#cfcfcf" stroke-width="1.5"/></svg>
<svg class="b" style="left:450.2px;top:400.05px;" width="14" height="14" viewBox="0 0 14 14"><rect x="3.5" y="0" width="6.3" height="2" rx="0.5" fill="#d2ad35"/><path d="M4.6 2 V5.6 L0.8 13.3 M9 2 V5.6 L9.5 6.6" fill="none" stroke="#d2ad35" stroke-width="1.1"/><path d="M2.6 9.6 H8.2 V14 H0.4 Q0 14 0.2 13.4z" fill="#d2ad35"/><rect x="8.8" y="4.6" width="4.6" height="8.8" rx="0.6" fill="none" stroke="#d2ad35" stroke-width="1.2"/><rect x="8.2" y="4" width="5.8" height="1.6" fill="#d2ad35"/><rect x="8.2" y="9.6" width="5.8" height="4.4" rx="0.6" fill="#d2ad35"/><path d="M4 7.5 h2.5 M3.4 8.6 h2" stroke="#d2ad35" stroke-width="0.7"/></svg>
<div class="t " style="left:468.5px;top:398.22px;font-size:14.8px;color:#c9a43a;">Sample-008</div>
<svg class="b" style="left:553.6px;top:399.85px;" width="15" height="15" viewBox="0 0 15 15"><circle cx="7.5" cy="7.5" r="6.8" fill="none" stroke="#c4c4c4" stroke-width="1.2"/><circle cx="7.5" cy="4.3" r="0.9" fill="#c4c4c4"/><path d="M6.3 6.5h1.5v4.6 M6.3 11.1h2.6" fill="none" stroke="#c4c4c4" stroke-width="1.1"/></svg>
<div class="t " style="left:583.3px;top:398.28px;font-size:14.63px;color:#3a3a3a;">Bioprocess Sample</div>
<svg class="b" style="left:724.2px;top:399.65000000000003px;" width="15" height="15" viewBox="0 0 15 15"><g fill="#3b2673" stroke="#3b2673"><path d="M7.7 1.4 V6.8 L2.1 11.8 M7.7 6.8 L13.5 11.1 M7.7 6.8 L11.3 5" stroke-width="1.5" fill="none"/><circle cx="7.7" cy="1.5" r="1.4" stroke="none"/><circle cx="7.9" cy="6.8" r="2.4" stroke="none"/><circle cx="2.5" cy="12" r="2.4" stroke="none"/><circle cx="13.4" cy="11.2" r="1.7" stroke="none"/><circle cx="11.4" cy="5" r="1.1" stroke="none"/></g></svg>
<div class="t " style="left:743.6px;top:398.36px;font-size:14.39px;color:#4a3f86;">CL-0001-01</div>
<svg class="b" style="left:827.3px;top:399.85px;" width="15" height="15" viewBox="0 0 15 15"><circle cx="7.5" cy="7.5" r="6.8" fill="none" stroke="#c4c4c4" stroke-width="1.2"/><circle cx="7.5" cy="4.3" r="0.9" fill="#c4c4c4"/><path d="M6.3 6.5h1.5v4.6 M6.3 11.1h2.6" fill="none" stroke="#c4c4c4" stroke-width="1.1"/></svg>
<svg class="b" style="left:847.3px;top:399.85px;" width="19" height="15" viewBox="0 0 19 15"><g fill="none" stroke="#c4c4c4" stroke-width="1.3"><rect x="-5.3" y="-3.3" width="10.6" height="6.6" rx="3.3" transform="translate(6 9.4) rotate(-35)"/><rect x="-5.3" y="-3.3" width="10.6" height="6.6" rx="3.3" transform="translate(12.6 5.4) rotate(-35)"/><path d="M1 0.8 L18 14.4" stroke-width="1.3"/></g></svg>
<svg class="b" style="left:920px;top:399.85px;" width="16" height="15" viewBox="0 0 16 15"><circle cx="6" cy="6" r="5" fill="none" stroke="#bdbdbd" stroke-width="1.2"/><path d="M9.6 9.6 L15 14.5" stroke="#bdbdbd" stroke-width="1.3"/></svg>
<div class="b" style="left:943.6px;top:398.1px;width:130.4px;height:18px;background:#d3f0f7;border-radius:3px;"></div>
<svg class="b" style="left:947px;top:399.65000000000003px;" width="15" height="15" viewBox="0 0 15 15"><g fill="#3b2673" stroke="#3b2673"><path d="M7.7 1.4 V6.8 L2.1 11.8 M7.7 6.8 L13.5 11.1 M7.7 6.8 L11.3 5" stroke-width="1.5" fill="none"/><circle cx="7.7" cy="1.5" r="1.4" stroke="none"/><circle cx="7.9" cy="6.8" r="2.4" stroke="none"/><circle cx="2.5" cy="12" r="2.4" stroke="none"/><circle cx="13.4" cy="11.2" r="1.7" stroke="none"/><circle cx="11.4" cy="5" r="1.1" stroke="none"/></g></svg>
<div class="t " style="left:966.2px;top:398.48px;font-size:14.05px;color:#4a3f86;">CL-0001</div>
<svg class="b" style="left:1027.1px;top:399.85px;" width="15" height="15" viewBox="0 0 15 15"><circle cx="7.5" cy="7.5" r="6.8" fill="none" stroke="#b9c9cc" stroke-width="1.2"/><circle cx="7.5" cy="4.3" r="0.9" fill="#b9c9cc"/><path d="M6.3 6.5h1.5v4.6 M6.3 11.1h2.6" fill="none" stroke="#b9c9cc" stroke-width="1.1"/></svg>
<svg class="b" style="left:1046.9px;top:399.85px;" width="19" height="15" viewBox="0 0 19 15"><g fill="none" stroke="#b9c9cc" stroke-width="1.3"><rect x="-5.3" y="-3.3" width="10.6" height="6.6" rx="3.3" transform="translate(6 9.4) rotate(-35)"/><rect x="-5.3" y="-3.3" width="10.6" height="6.6" rx="3.3" transform="translate(12.6 5.4) rotate(-35)"/><path d="M1 0.8 L18 14.4" stroke-width="1.3"/></g></svg>
<svg class="b" style="left:1130px;top:399.85px;" width="15" height="15" viewBox="0 0 15 15"><path d="M0.8 0.8 L14.2 14.2 M14.2 0.8 L0.8 14.2" stroke="#666" stroke-width="1.5"/></svg>
<svg class="b" style="left:1165.6px;top:398.15000000000003px;" width="13" height="16" viewBox="0 0 13 16"><g fill="none" stroke="#4a8ae0" stroke-width="1.2"><rect x="4" y="0.8" width="5" height="2.2"/><path d="M2.5 3.5 h8 q1.8 0 1.8 1.8 v8.5 q0 1.5 -1.5 1.5 h-8.5 q-1.5 0 -1.5 -1.5 v-8.5 q0 -1.8 1.7 -1.8z"/><path d="M2.8 7.5 v5"/></g></svg>
<div class="t " style="left:1182.7px;top:397.88px;font-size:14.34px;color:#3a80dc;">CTNR-0005</div>
<svg class="b" style="left:1264px;top:398.35px;" width="16" height="16" viewBox="0 0 16 16"><g fill="none" stroke="#4a8ae0" stroke-width="1.3"><path d="M7 2.5 H1 V15 H13.5 V9"/><path d="M9.5 0.8 H15.2 V6.5 M15 1 L7.5 8.5"/></g></svg>
<div class="t " style="left:1295.2px;top:398.20px;font-size:14.86px;color:#333;">Nov 17, 2025, 10:13 AM</div>
<div class="t " style="left:1470.8px;top:396.26px;font-size:14.68px;color:#444;">Jan 15, 2026, 11:00 AM</div>
<div class="t " style="left:1642.6px;top:398.24px;font-size:14.76px;color:#3e8e66;">Active</div>
<div class="t " style="left:1716.3px;top:397.06px;font-size:14.7px;color:#4a80d8;">7</div>
<div class="t" style="left:1805.7px;top:398.26px;font-size:14.7px;color:#333;">(0) View and <span style="color:#d4b13c">Edit</span></div>
</div>
<svg class="b" style="left:390.3px;top:443.5px;" width="6" height="9" viewBox="0 0 6 9"><path d="M6 0 V9 L0 4.5z" fill="#888"/></svg>
<div class="b" style="left:403px;top:443px;width:1417px;height:9px;background:#8a8a8a;border-radius:4.5px;"></div>
<svg class="b" style="left:1883px;top:443px;" width="6" height="9" viewBox="0 0 6 9"><path d="M0 0 V9 L6 4.5z" fill="#888"/></svg>
<svg class="b" style="left:213.9px;top:10.9px;" width="17" height="17" viewBox="0 0 17 17"><g fill="none" stroke="#7b7b7b" stroke-width="1.2"><rect x="0.6" y="0.6" width="15.8" height="15.8"/><rect x="2.8" y="2.8" width="11.4" height="3.6"/><rect x="2.8" y="8.5" width="5.5" height="5.5"/><path d="M9.8 9h4.4 M9.8 11.3h4.4 M9.8 13.6h4.4"/></g></svg>
<svg class="b" style="left:249.6px;top:10.2px;" width="19" height="17" viewBox="0 0 19 17"><g fill="none" stroke="#7b7b7b" stroke-width="1.2"><path d="M0.6 0 V16.4 H18.4"/><path d="M3.2 16.4 V3.5 H6.2 V16.4 M6.2 6.5 H9.5 V16.4 M9.5 10.5 H13 V16.4"/></g></svg>
<svg class="b" style="left:287.5px;top:12.4px;" width="16" height="15" viewBox="0 0 16 15"><g fill="none" stroke="#7b7b7b" stroke-width="1.3"><circle cx="6.5" cy="6.3" r="5.6"/><path d="M10.6 10.4 L15.4 14.6"/></g></svg>
<svg class="b" style="left:337.1px;top:10.5px;" width="16" height="18" viewBox="0 0 16 18"><g fill="none" stroke="#7b7b7b" stroke-width="1.3"><rect x="2.5" y="0.7" width="12.8" height="16.6" rx="1"/><path d="M11.8 0.7 V17.3"/><path d="M0.5 3.5h3 M0.5 6.5h3 M0.5 9.5h3 M0.5 12.5h3 M0.5 15h3" stroke-width="1"/></g></svg>
<svg class="b" style="left:374.7px;top:10.9px;" width="15" height="18" viewBox="0 0 15 18"><g fill="none" stroke="#7b7b7b" stroke-width="1.3"><rect x="0.7" y="2.2" width="13.6" height="15" rx="1"/><path d="M3 5 V2.2 H5.2 Q5.5 0.4 7.5 0.4 Q9.5 0.4 9.8 2.2 H12 V5z" fill="#7b7b7b"/><path d="M3.5 8h5 M3.5 10.5h8 M3.5 13h5 M3.5 15.2h8" stroke-width="1"/></g></svg>
<svg class="b" style="left:408.3px;top:10.9px;" width="20" height="17" viewBox="0 0 20 17"><g fill="none" stroke="#7b7b7b" stroke-width="1.2"><path d="M0.6 0 V16.4 H19.5"/><path d="M3.5 11 Q6 2.5 9 6 Q12 11 15 6.5 L16.5 5.5"/></g></svg>
<svg class="b" style="left:444.3px;top:12.4px;" width="20" height="16" viewBox="0 0 20 16"><g fill="none" stroke="#7b7b7b" stroke-width="1.3"><path d="M1 0.7 H19 V12 H6 L3 15.2 V12 H1z"/><path d="M4 3.5 H7 L11.5 8.5 H15.5 M4 8.5 H7 L11.5 3.5 H15.5 M13.8 1.8 L15.8 3.5 L13.8 5.2 M13.8 6.8 L15.8 8.5 L13.8 10.2"/></g></svg>
<svg class="b" style="left:483.7px;top:10.5px;" width="15" height="18" viewBox="0 0 15 18"><g fill="none" stroke="#7b7b7b" stroke-width="1.3"><rect x="0.7" y="2.2" width="13.6" height="15.3" rx="1"/><path d="M3 5 V2.2 H5.2 Q5.5 0.4 7.5 0.4 Q9.5 0.4 9.8 2.2 H12 V5z" fill="#7b7b7b"/><rect x="3" y="8" width="9" height="7" stroke-width="1"/><path d="M4.5 11.5 L6.8 13.5 L10.5 9.2" stroke-width="1.1"/></g></svg>
<svg class="b" style="left:518px;top:10.5px;" width="18" height="18" viewBox="0 0 18 18"><g fill="#7b7b7b"><rect x="3" y="0" width="6" height="2.2"/><path d="M3.8 2.2 h4.4 v4.5 L12 16.5 Q12.3 17.8 11 17.8 H1 Q-0.3 17.8 0.2 16.5 L3.8 6.7z" fill="none" stroke="#7b7b7b" stroke-width="1.2"/><path d="M1.5 12 H10.5 L12 16.5 Q12.3 17.8 11 17.8 H1 Q-0.3 17.8 0.2 16.5z"/><rect x="11" y="6" width="6.5" height="12" rx="0.8"/><path d="M12.5 8 v7" stroke="#fff" stroke-width="0.9"/></g></svg>
<svg class="b" style="left:553.1px;top:10.5px;" width="20" height="18" viewBox="0 0 20 18"><g fill="#7b7b7b" stroke="#7b7b7b"><path d="M10 1.5 V8 L3.5 14.5 M10 8 L17 13" stroke-width="1.4" fill="none"/><path d="M10 8 L14 5.5" stroke-width="1.2"/><circle cx="10" cy="1.7" r="1.5"/><circle cx="10" cy="8" r="3"/><circle cx="3.6" cy="14.4" r="3.2"/><circle cx="17" cy="13.2" r="2"/><circle cx="14.5" cy="5.2" r="1.2"/></g></svg>
<svg class="b" style="left:590.3px;top:9.7px;" width="19" height="20" viewBox="0 0 19 20"><g fill="none" stroke="#7b7b7b"><path d="M9.5 0.8 L18 5.5 V14.5 L9.5 19.2 L1 14.5 V5.5z" stroke-width="1.4"/><path d="M9.5 3.5 L15.5 6.8 V13.2 L9.5 16.5 L3.5 13.2 V6.8z" stroke-width="1.3"/><ellipse cx="9.5" cy="10" rx="3.5" ry="2" stroke-width="1.1"/><path d="M8 10 h3" stroke-width="1"/></g></svg>
<svg class="b" style="left:626.3px;top:9.4px;" width="18" height="21" viewBox="0 0 18 21"><path d="M0 6 Q0 4.5 1.5 4 L10 0 Q18 3.5 18 10.5 Q18 17.5 10 21 L1.5 17 Q0 16.5 0 15z" fill="#7b7b7b"/><circle cx="7" cy="10.5" r="2.7" fill="#fff"/></svg>
<svg class="b" style="left:663.7px;top:10px;" width="13" height="19" viewBox="0 0 13 19"><g fill="none" stroke="#7b7b7b" stroke-width="1.2"><path d="M2 0.6 H11 M4 0.6 V6 Q0.6 9 0.6 13 Q0.6 18.4 6.5 18.4 Q12.4 18.4 12.4 13 Q12.4 9 9 6 V0.6"/><path d="M1 12.5 Q4 10.5 6.5 12 Q9 13.5 12 12"/></g></svg>
<svg class="b" style="left:698px;top:10.5px;" width="20" height="19" viewBox="0 0 20 19"><path d="M10 0.9 L12.6 7 L19.2 7.3 L14.1 11.5 L15.8 18 L10 14.3 L4.2 18 L5.9 11.5 L0.8 7.3 L7.4 7z" fill="none" stroke="#7b7b7b" stroke-width="1.2" stroke-linejoin="round"/></svg>
<svg class="b" style="left:735.6px;top:10.5px;" width="19" height="18" viewBox="0 0 19 18"><g fill="none" stroke="#7b7b7b" stroke-width="1.2"><path d="M0.6 17.4 V15 Q0.6 12.5 3.5 11.8 L5.5 11 Q4 9.5 4 6.5 Q4 2.5 7.3 2.5 Q10.6 2.5 10.6 6.5 Q10.6 9.5 9.1 11 L11 11.8 Q14 12.5 14 15 V17.4z"/><path d="M8.5 2 Q9.5 0.6 11.5 0.6 Q14.8 0.6 14.8 4.6 Q14.8 7.5 13.3 9 L15.3 9.8 Q18.3 10.5 18.3 13 V15.3 H14.5"/></g></svg>
<svg class="b" style="left:1604.5px;top:11px;" width="15" height="18" viewBox="0 0 15 18"><g fill="none" stroke="#bdbdbd" stroke-width="1.2"><path d="M7.5 1.5 Q12.5 1.5 12.5 7.5 V11.5 L14.3 14 H0.7 L2.5 11.5 V7.5 Q2.5 1.5 7.5 1.5z"/><path d="M5.5 15.5 Q7.5 17.8 9.5 15.5"/></g></svg>
<svg class="b" style="left:14.5px;top:55px;" width="13" height="15" viewBox="0 0 13 15"><g fill="none" stroke="#9474cf" stroke-width="1.2"><rect x="2" y="0.6" width="10.4" height="13.8" rx="0.8"/><path d="M0.3 3h2.5 M0.3 5.5h2.5 M0.3 8h2.5 M0.3 10.5h2.5 M0.3 13h2.5" stroke-width="0.9"/></g></svg>
<svg class="b" style="left:146px;top:57px;" width="13" height="15" viewBox="0 0 13 15"><g fill="none" stroke="#2a6fd6" stroke-width="1.2"><rect x="0.6" y="2" width="11.8" height="12.4" rx="0.8"/><path d="M3 4 V2 H4.8 Q5 0.3 6.5 0.3 Q8 0.3 8.2 2 H10 V4z" fill="#2a6fd6"/><path d="M3 6.8h4 M3 9h7 M3 11.2h4" stroke-width="0.9"/></g></svg>
<svg class="b" style="left:1593.3px;top:54.2px;" width="20" height="19" viewBox="0 0 20 19"><path d="M10 0.9 L12.6 7 L19.2 7.3 L14.1 11.5 L15.8 18 L10 14.3 L4.2 18 L5.9 11.5 L0.8 7.3 L7.4 7z" fill="none" stroke="#c4c4c4" stroke-width="1.2" stroke-linejoin="round"/></svg>
<div class="b" style="left:1622px;top:52px;width:43px;height:23.5px;background:#1d7a45;border-radius:5px;"></div>
<div class="t " style="left:1632.0px;top:54.34px;font-size:12px;color:#fff;font-weight:700;">0</div>
<svg class="b" style="left:1645px;top:58px;" width="13" height="12" viewBox="0 0 13 12"><path d="M6.5 0.8 Q12.3 0.8 12.3 5.2 Q12.3 9.5 6.5 9.5 Q5.2 9.5 4 9.2 L0.8 11 L2 8.2 Q0.7 7 0.7 5.2 Q0.7 0.8 6.5 0.8z" fill="#fff"/></svg>
<div class="b" style="left:1670px;top:52px;width:64px;height:23.5px;border:2px solid #1d7a45;border-radius:5px;box-sizing:border-box;background:#fff;"></div>
<div class="t " style="left:1678.8px;top:55.00px;font-size:10.1px;color:#1d7a45;font-weight:700;">ACTIVE</div>
<svg class="b" style="left:1716.5px;top:62px;" width="7" height="4" viewBox="0 0 7 4"><path d="M0 0h7L3.5 4z" fill="#1d7a45"/></svg>
<div class="b" style="left:1739.4px;top:52px;width:78px;height:23.5px;border:2px solid #1d7a45;border-radius:5px;box-sizing:border-box;background:#fff;overflow:hidden;"></div>
<div class="b" style="left:1739.4px;top:52px;width:27.5px;height:23.5px;background:#1d7a45;border-radius:5px 0 0 5px;"></div>
<svg class="b" style="left:1747px;top:57.5px;" width="12" height="12" viewBox="0 0 12 12"><g fill="none" stroke="#fff" stroke-width="1.4"><path d="M1 11 L1.8 8 L8.5 1.3 L10.7 3.5 L4 10.2z"/><path d="M7.3 2.5 L9.5 4.7"/></g></svg>
<div class="t " style="left:1773.5px;top:55.00px;font-size:10.1px;color:#1d7a45;font-weight:700;">PUBLIC</div>
<div class="b" style="left:1822.3px;top:52px;width:82.7px;height:23.5px;background:#1d7a45;border-radius:5px;"></div>
<svg class="b" style="left:1828.5px;top:57.5px;" width="13" height="13" viewBox="0 0 13 13"><g fill="none" stroke="#fff" stroke-width="1.2"><circle cx="5.2" cy="5.2" r="4.4"/><path d="M8.4 8.4 L12.3 12.3"/></g></svg>
<div class="t " style="left:1844.7px;top:54.17px;font-size:11.05px;color:#fff;font-weight:700;letter-spacing:-0.2px;">ChemACX</div>
<svg class="b" style="left:13.5px;top:98px;" width="19" height="15" viewBox="0 0 19 15"><g fill="none" stroke="#7d8186" stroke-width="1.2"><rect x="0.6" y="0.6" width="17.4" height="13.8"/><path d="M6 0.6 V14.4"/><path d="M15.5 7.5 H9 M11.5 5 L9 7.5 L11.5 10" stroke-width="1.1"/></g></svg>
<svg class="b" style="left:44.8px;top:97.5px;" width="17" height="16" viewBox="0 0 17 16"><g fill="none" stroke="#e9eaec" stroke-width="1.3"><rect x="0.7" y="0.7" width="15.6" height="14.6" rx="1.5"/><path d="M0.7 5 H16.3 M0.7 8.5 H16.3 M0.7 12 H16.3 M5 5 V15.3"/></g></svg>
<svg class="b" style="left:135.8px;top:96px;" width="21" height="18" viewBox="0 0 21 18"><ellipse cx="7.5" cy="6" rx="7.2" ry="5.5" fill="#6f7378"/><path d="M2 9.5 L1 13 L5.5 11z" fill="#6f7378"/><ellipse cx="14" cy="11" rx="6.5" ry="5" fill="#b9bcc0"/><path d="M18 14.5 L19.5 17.5 L15 15.5z" fill="#b9bcc0"/></svg>
<svg class="b" style="left:1297.3px;top:97.3px;" width="17" height="17" viewBox="0 0 17 17"><g fill="none" stroke="#7d8186" stroke-width="1.2"><circle cx="8.5" cy="8.5" r="7.8"/></g><circle cx="8.5" cy="5" r="1.1" fill="#7d8186"/><path d="M7 7.6h2v5 M6.8 12.6h3.6" fill="none" stroke="#7d8186" stroke-width="1.3"/></svg>
<svg class="b" style="left:1395px;top:97.3px;" width="18" height="17" viewBox="0 0 18 17"><g fill="none" stroke="#7d8186" stroke-width="1.3"><path d="M3 4.5 A7.5 7.5 0 1 1 2.5 11.5"/><path d="M0.8 1.5 L2.8 5 L6.3 3.5"/><path d="M9.8 4.5 V9 L12.8 11.5"/></g></svg>
<svg class="b" style="left:1476.7px;top:98px;" width="15" height="15" viewBox="0 0 15 15"><g fill="none" stroke="#7d8186" stroke-width="1.2"><path d="M3 11 L4 8 L11 1 L13.5 3.5 L6.5 10.5z"/><path d="M0 14.3 H15"/></g></svg>
<svg class="b" style="left:1558.3px;top:97.3px;" width="17" height="17" viewBox="0 0 17 17"><g fill="none" stroke="#7d8186" stroke-width="1.2"><path d="M7 3.5 H0.8 V16.2 H13.5 V10"/><path d="M10 0.8 H16.2 V7 M16 1 L8 9"/></g></svg>
<svg class="b" style="left:1641.7px;top:98px;" width="20" height="15" viewBox="0 0 20 15"><g fill="none" stroke="#7d8186" stroke-width="1.4"><rect x="-6" y="-3.8" width="12" height="7.6" rx="3.8" transform="translate(6.5 9) rotate(-30)"/><rect x="-6" y="-3.8" width="12" height="7.6" rx="3.8" transform="translate(13 6) rotate(-30)"/></g></svg>
<svg class="b" style="left:1727.7px;top:97px;" width="21" height="18" viewBox="0 0 21 18"><g fill="#7d8186"><path d="M0 0.5 H11 V17.5 H0z"/><circle cx="15.5" cy="10" r="2.6"/><path d="M10.8 17.5 Q10.8 13.5 15.5 13.5 Q20.5 13.5 20.5 17.5z"/></g><g fill="#fff"><rect x="2" y="2.5" width="2" height="2"/><rect x="5" y="2.5" width="2" height="2"/><rect x="8" y="2.5" width="1.5" height="2"/><rect x="2" y="6" width="2" height="2"/><rect x="5" y="6" width="2" height="2"/><rect x="8" y="6" width="1.5" height="2"/><rect x="2" y="9.5" width="2" height="2"/><rect x="5" y="9.5" width="2" height="2"/><rect x="4" y="13.5" width="3" height="4"/></g></svg>
<svg class="b" style="left:1895.5px;top:96px;" width="5" height="18" viewBox="0 0 5 18"><g fill="#7d8186"><circle cx="2.5" cy="2.5" r="1.6"/><circle cx="2.5" cy="9" r="1.6"/><circle cx="2.5" cy="15.5" r="1.6"/></g></svg>
<svg class="b" style="left:0;top:0" width="1918" height="940" viewBox="0 0 1918 940"><defs><clipPath id="tc"><rect x="364" y="907.2" width="1554" height="40"/></clipPath></defs><g clip-path="url(#tc)"><path d="M362.51 905.20 Q362.50 905.20 362.51 905.20 L363.65 905.49 Q368.50 906.70 370.62 911.23 L380.88 933.07 Q383.00 937.60 388.00 937.60 L466.50 937.60 Q471.50 937.60 469.38 933.07 L459.12 911.23 Q457.00 906.70 452.15 905.49 L451.01 905.20 Q451.00 905.20 450.99 905.20 Z" fill="#e5e6ea" stroke="#c7c8cc" stroke-width="1"/><path d="M570.51 905.20 Q570.50 905.20 570.49 905.20 L569.35 905.49 Q564.50 906.70 562.38 911.23 L552.12 933.07 Q550.00 937.60 555.00 937.60 L634.00 937.60 Q639.00 937.60 641.12 933.07 L651.38 911.23 Q653.50 906.70 658.35 905.49 L659.49 905.20 Q659.50 905.20 659.49 905.20 Z" fill="#e5e6ea" stroke="#c7c8cc" stroke-width="1"/><path d="M659.51 905.20 Q659.50 905.20 659.49 905.20 L658.35 905.49 Q653.50 906.70 651.38 911.23 L641.12 933.07 Q639.00 937.60 644.00 937.60 L753.50 937.60 Q758.50 937.60 760.62 933.07 L770.88 911.23 Q773.00 906.70 777.85 905.49 L778.99 905.20 Q779.00 905.20 778.99 905.20 Z" fill="#e5e6ea" stroke="#c7c8cc" stroke-width="1"/><path d="M779.01 905.20 Q779.00 905.20 778.99 905.20 L777.85 905.49 Q773.00 906.70 770.88 911.23 L760.62 933.07 Q758.50 937.60 763.50 937.60 L863.00 937.60 Q868.00 937.60 870.12 933.07 L880.38 911.23 Q882.50 906.70 887.35 905.49 L888.49 905.20 Q888.50 905.20 888.49 905.20 Z" fill="#e5e6ea" stroke="#c7c8cc" stroke-width="1"/><path d="M888.51 905.20 Q888.50 905.20 888.49 905.20 L887.35 905.49 Q882.50 906.70 880.38 911.23 L870.12 933.07 Q868.00 937.60 873.00 937.60 L1034.50 937.60 Q1039.50 937.60 1041.62 933.07 L1051.88 911.23 Q1054.00 906.70 1058.85 905.49 L1059.99 905.20 Q1060.00 905.20 1059.99 905.20 Z" fill="#e5e6ea" stroke="#c7c8cc" stroke-width="1"/><path d="M1060.01 905.20 Q1060.00 905.20 1059.99 905.20 L1058.85 905.49 Q1054.00 906.70 1051.88 911.23 L1041.62 933.07 Q1039.50 937.60 1044.50 937.60 L1210.20 937.60 Q1215.20 937.60 1217.32 933.07 L1227.58 911.23 Q1229.70 906.70 1234.55 905.49 L1235.69 905.20 Q1235.70 905.20 1235.69 905.20 Z" fill="#e5e6ea" stroke="#c7c8cc" stroke-width="1"/><path d="M1235.71 905.20 Q1235.70 905.20 1235.69 905.20 L1234.55 905.49 Q1229.70 906.70 1227.58 911.23 L1217.32 933.07 Q1215.20 937.60 1220.20 937.60 L1368.40 937.60 Q1373.40 937.60 1375.52 933.07 L1385.78 911.23 Q1387.90 906.70 1392.75 905.49 L1393.89 905.20 Q1393.90 905.20 1393.89 905.20 Z" fill="#e5e6ea" stroke="#c7c8cc" stroke-width="1"/><path d="M451.01 905.20 Q451.00 905.20 451.01 905.20 L452.15 905.49 Q457.00 906.70 459.12 911.23 L469.38 933.07 Q471.50 937.60 476.50 937.60 L545.00 937.60 Q550.00 937.60 552.12 933.07 L562.38 911.23 Q564.50 906.70 569.35 905.49 L570.49 905.20 Q570.50 905.20 570.49 905.20 Z" fill="#ffffff" stroke="#c7c8cc" stroke-width="1"/></g><rect x="364" y="906.6" width="1554" height="1.3" fill="#c9cacd"/></svg>
<div class="t " style="left:396.0px;top:913.17px;font-size:14.8px;color:#6a6d72;">Overview</div>
<div class="t " style="left:483.4px;top:913.35px;font-size:14.3px;color:#6a6d72;">Samples</div>
<div class="t " style="left:566.0px;top:913.41px;font-size:14.1px;color:#6a6d72;">Task Plan</div>
<div class="t " style="left:651.4px;top:913.22px;font-size:14.67px;color:#6a6d72;">CLD Materials</div>
<div class="t " style="left:769.5px;top:913.31px;font-size:14.4px;color:#6a6d72;">CLD Analysis</div>
<div class="t " style="left:880.4px;top:913.07px;font-size:15.1px;color:#6a6d72;">Procedure-Bioreactor</div>
<div class="t " style="left:1050.3px;top:913.07px;font-size:15.1px;color:#6a6d72;">Procedure-Purification</div>
<div class="t " style="left:1226.0px;top:913.26px;font-size:14.55px;color:#6a6d72;">Analysis and Results</div>
<div class="t " style="left:1388.6px;top:913.30px;font-size:15px;color:#222;">+</div>
<div class="b" style="left:1918px;top:0px;width:2px;height:940px;background:#000;"></div>
</body></html>
